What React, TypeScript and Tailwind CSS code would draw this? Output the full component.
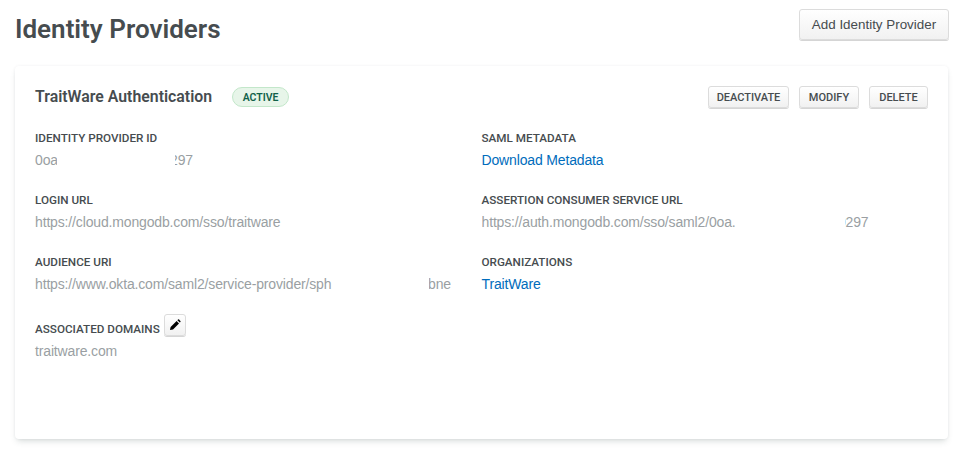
import React from 'react';

const bodyFont = "font-['Liberation_Sans',Arial,sans-serif]";
const headFont = "font-['Roboto',Arial,sans-serif]";

const Label = (props: { children: React.ReactNode }) => (
  <div className={`${headFont} text-[11.7px] leading-[16px] font-medium text-[#464c4f]`}>
    {props.children}
  </div>
);

const Value = (props: { children: React.ReactNode }) => (
  <div className={`${bodyFont} mt-[6px] h-[16px] text-[14px] leading-[16px] tracking-[-0.15px] whitespace-nowrap text-[#9a9fa3]`}>
    {props.children}
  </div>
);

const LinkValue = (props: { children: React.ReactNode }) => (
  <div className={`${bodyFont} mt-[6px] h-[16px] text-[14px] leading-[16px] tracking-[-0.15px] whitespace-nowrap text-[#006cbc]`}>
    {props.children}
  </div>
);

// Value with its middle blanked out, as in the picture
const Redacted = (props: { left: string; right: string; leftWidth: number; gap: number; rightWidth: number }) => (
  <span className="flex">
    <span className="overflow-hidden" style={{ width: props.leftWidth }}>
      {props.left}
    </span>
    <span
      className="flex justify-end overflow-hidden"
      style={{ marginLeft: props.gap, width: props.rightWidth }}
    >
      {props.right}
    </span>
  </span>
);

const SmallButton = (props: { width: string; children: React.ReactNode }) => (
  <button
    className={`${headFont} ${props.width} h-[22px] rounded-[3px] border border-[#dcdcdc] bg-gradient-to-b from-white to-[#f1f1f1] pt-[1px] text-[11px] leading-[19px] font-medium text-[#464c4f] shadow-[0_1px_0_#d5d5d5]`}
  >
    {props.children}
  </button>
);

const App = () => {
  return (
    <div className="h-[456px] w-[958px] overflow-hidden bg-white pt-[9px] pl-[15px]">
      <div className="flex w-[934px] items-start justify-between">
        <h1 className={`${headFont} mt-[6px] text-[26px] leading-[28px] font-semibold text-[#464c4f]`}>
          Identity Providers
        </h1>
        <button
          className={`${bodyFont} h-[31px] w-[150px] rounded-[3px] border border-[#dcdcdc] bg-gradient-to-b from-white to-[#f1f1f1] pt-[2px] text-[13.4px] text-[#464c4f] shadow-[0_1px_0_#d5d5d5]`}
        >
          Add Identity Provider
        </button>
      </div>

      <div className="mt-[23px] h-[373px] w-[933px] rounded-[4px] bg-white px-[20px] pt-[20px] shadow-[0_4px_6px_-2px_rgba(70,90,85,0.22),0_0_3px_rgba(70,76,79,0.07)]">
        <div className="flex h-[22px] items-center justify-between">
          <div className="flex items-center">
            <h2 className={`${headFont} text-[15.85px] leading-[20px] font-semibold text-[#464c4f]`}>
              TraitWare Authentication
            </h2>
            <span
              className={`${headFont} ml-[20px] flex h-[20px] w-[57px] items-center justify-center rounded-full border border-[#c3e7ca] bg-[#e7f5e9] pt-[1px] text-[10.5px] font-semibold text-[#116149]`}
            >
              ACTIVE
            </span>
          </div>
          <div className="flex gap-[10px]">
            <SmallButton width="w-[81px]">DEACTIVATE</SmallButton>
            <SmallButton width="w-[60px]">MODIFY</SmallButton>
            <SmallButton width="w-[59px]">DELETE</SmallButton>
          </div>
        </div>

        <div className="mt-[22px] grid grid-cols-[446.5px_1fr]">
          <div className="h-[62px]">
            <Label>IDENTITY PROVIDER ID</Label>
            <Value>
              <Redacted left="0oa" right="297" leftWidth={22} gap={118} rightWidth={18} />
            </Value>
          </div>
          <div className="h-[62px]">
            <Label>SAML METADATA</Label>
            <LinkValue>Download Metadata</LinkValue>
          </div>
          <div className="h-[62px]">
            <Label>LOGIN URL</Label>
            <Value>https://cloud.mongodb.com/sso/traitware</Value>
          </div>
          <div className="h-[62px]">
            <Label>ASSERTION CONSUMER SERVICE URL</Label>
            <Value>
              <Redacted
                left="https://auth.mongodb.com/sso/saml2/0oa."
                right="0297"
                leftWidth={254}
                gap={109}
                rightWidth={24}
              />
            </Value>
          </div>
          <div className="h-[60px]">
            <Label>AUDIENCE URI</Label>
            <Value>
              <Redacted
                left="https://www.okta.com/saml2/service-provider/sph"
                right="bne"
                leftWidth={297}
                gap={97}
                rightWidth={22}
              />
            </Value>
          </div>
          <div className="h-[60px]">
            <Label>ORGANIZATIONS</Label>
            <LinkValue>TraitWare</LinkValue>
          </div>
          <div>
            <div className="flex items-end gap-[4px]">
              <Label>ASSOCIATED DOMAINS</Label>
              <button className="mb-[1px] flex h-[22px] w-[22px] items-center justify-center rounded-[3px] border border-[#dcdcdc] bg-gradient-to-b from-white to-[#f1f1f1] shadow-[0_1px_0_#d5d5d5]">
                <svg width="12" height="12" viewBox="0 0 12 12" fill="#000">
                  <path d="M1 11l.6-3L7.6 2l2.4 2.4-6 6z" />
                  <path d="M8.4 1.2l.6-.6a.8.8 0 0 1 1.1 0l1.3 1.3a.8.8 0 0 1 0 1.1l-.6.6z" />
                </svg>
              </button>
            </div>
            <Value>traitware.com</Value>
          </div>
        </div>
      </div>
    </div>
  );
};

export default App;
